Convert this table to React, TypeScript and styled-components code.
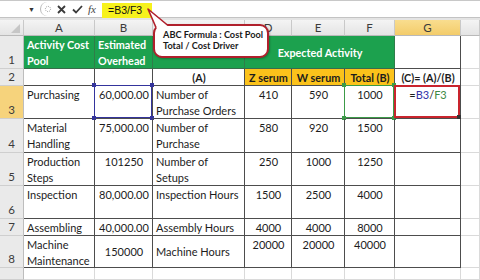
import React from 'react';
import styled, { createGlobalStyle, css } from 'styled-components';

const Global = createGlobalStyle`
  html, body { margin: 0; padding: 0; background: #fff; overflow: hidden; }
  * { box-sizing: border-box; }
`;

const FONT = `"Lato", "Open Sans", "Liberation Sans", sans-serif`;

const Page = styled.div`
  position: relative;
  width: 480px;
  height: 280px;
  overflow: hidden;
  display: flex;
  flex-direction: column;
  font-family: ${FONT};
  background: #e4e4e4;
`;

const FormulaBar = styled.div`
  height: 18px;
  display: flex;
  align-items: center;
  background: #fff;
  border-top: 1px solid #c8c8c8;
  border-bottom: 1px solid #c3c3c3;
  flex-shrink: 0;
`;

const NameBox = styled.div`
  width: 38px;
  height: 100%;
  display: flex;
  align-items: center;
  justify-content: flex-end;
  padding-right: 3px;
  font-size: 7px;
  color: #333;
`;

const ButtonGroup = styled.div`
  display: flex;
  align-items: center;
  height: 14px;
  width: 60px;
  margin-left: 2px;
  border-left: 1px solid #b8b8b8;
  border-radius: 8px 0 0 8px;
  padding-left: 1px;
`;

const BarIcon = styled.span<{ $w: number }>`
  width: ${p => p.$w}px;
  display: inline-flex;
  justify-content: center;
  align-items: center;
  color: #3a3a3a;
  line-height: 1;
`;

const Fx = styled.span`
  font-family: "Liberation Serif", "DejaVu Serif", serif;
  font-style: italic;
  font-size: 11px;
  color: #444;
  width: 14px;
  text-align: center;
`;

const FormulaInput = styled.div`
  flex: 1;
  height: 100%;
  display: flex;
  align-items: center;
  padding-left: 2px;
`;

const FormulaText = styled.span`
  background: #f7f21c;
  height: 15px;
  width: 50px;
  margin-top: 2px;
  padding-left: 6px;
  font-family: "Liberation Sans", sans-serif;
  font-size: 10.5px;
  line-height: 15px;
  color: #111;
`;

const Sheet = styled.div`
  flex: 1;
  margin-top: 2px;
  display: grid;
  grid-template-columns: 24px 71px 58px 92px 47px 53px 50px 66px 1fr;
  grid-template-rows: 16px 33px 17px 33px 34px 33px 33px 17px 32px 1fr;
  background: #fff;
`;

const ColHead = styled.div<{ $sel?: boolean }>`
  display: flex;
  align-items: center;
  justify-content: center;
  font-size: 11.5px;
  color: #3b3b3b;
  background: ${p => (p.$sel ? 'linear-gradient(#f9dd8f, #f3cc6a)' : 'linear-gradient(#f4f4f4, #e4e4e4)')};
  border-right: 1px solid #c9c9c9;
  border-bottom: 1px solid #b9b9b9;
`;

const Corner = styled(ColHead)`
  position: relative;
  &::after {
    content: '';
    position: absolute;
    right: 3px;
    bottom: 2px;
    border-left: 9px solid transparent;
    border-bottom: 9px solid #c6c6c6;
  }
`;

const RowHead = styled.div<{ $sel?: boolean }>`
  display: flex;
  align-items: flex-end;
  justify-content: center;
  padding-bottom: 1px;
  font-size: 11.5px;
  line-height: 14px;
  color: #3b3b3b;
  background: ${p => (p.$sel ? '#f6d37c' : '#eaeaea')};
  border-right: 1px solid #bdbdbd;
  border-bottom: 1px solid #cfcfcf;
`;

type Tone = 'green' | 'gold' | 'plain' | 'blank';

const Cell = styled.div<{
  $tone?: Tone;
  $align?: 'left' | 'center';
  $mid?: boolean;
  $bold?: boolean;
  $span?: number;
}>`
  position: relative;
  display: flex;
  flex-direction: column;
  justify-content: ${p => (p.$mid ? 'center' : 'flex-start')};
  align-items: ${p => (p.$align === 'left' ? 'flex-start' : 'center')};
  padding: 1px 2px 0 3px;
  font-size: ${p => (p.$bold ? '10.8px' : '11px')};
  line-height: 16px;
  white-space: nowrap;
  color: #1c1c1c;
  font-weight: ${p => (p.$bold ? 700 : 400)};
  grid-column: ${p => (p.$span ? `span ${p.$span}` : 'auto')};
  border-right: 1px solid #4d4d4d;
  border-bottom: 1px solid #4d4d4d;
  ${p =>
    p.$tone === 'green' &&
    css`
      background: #1ca14e;
      color: #fff;
      border-right-color: #2f7d4a;
      border-bottom-color: #3a6b4b;
    `}
  ${p =>
    p.$tone === 'gold' &&
    css`
      background: #fbc21b;
    `}
  ${p =>
    p.$tone === 'blank' &&
    css`
      border-right-color: #dadada;
      border-bottom-color: #dadada;
    `}
`;

const Frame = styled.div<{ $color: string; $w: number }>`
  position: absolute;
  inset: -1px 0 0 -1px;
  border: ${p => p.$w}px solid ${p => p.$color};
  pointer-events: none;
`;

const Knob = styled.span<{ $color: string; $x: 'l' | 'r'; $y: 't' | 'b' }>`
  position: absolute;
  width: 4px;
  height: 4px;
  background: ${p => p.$color};
  ${p => (p.$x === 'l' ? 'left: -3px;' : 'right: -3px;')}
  ${p => (p.$y === 't' ? 'top: -3px;' : 'bottom: -3px;')}
`;

const Ref = styled.span<{ $c: string }>`
  color: ${p => p.$c};
`;

const Callout = styled.div`
  position: absolute;
  left: 153px;
  top: 24px;
  width: 116px;
  height: 34px;
  background: #fff;
  border: 2px solid #b0202c;
  border-radius: 9px;
  box-shadow: 1px 1px 2px rgba(0, 0, 0, 0.25);
  padding: 3px 0 0 8px;
  font-family: ${FONT};
  font-weight: 700;
  font-size: 9.2px;
  line-height: 11px;
  color: #1a1a1a;
  white-space: nowrap;
`;

const Tail = styled.svg`
  position: absolute;
  left: 144px;
  top: 5px;
  overflow: visible;
`;

function Selection({ color, width = 1 }: { color: string; width?: number }) {
  return (
    <Frame $color={color} $w={width}>
      {width === 1 && (
        <>
          <Knob $color={color} $x="l" $y="t" />
          <Knob $color={color} $x="r" $y="t" />
          <Knob $color={color} $x="l" $y="b" />
        </>
      )}
      <Knob $color={width === 1 ? color : '#333'} $x="r" $y="b" />
    </Frame>
  );
}

type CellDef = {
  lines: string[];
  tone?: Tone;
  align?: 'left' | 'center';
  mid?: boolean;
  bold?: boolean;
  span?: number;
  sel?: 'blue' | 'green' | 'red';
  node?: React.ReactNode;
};

const L = (s: string, extra: Partial<CellDef> = {}): CellDef => ({ lines: s ? s.split('|') : [], align: 'left', ...extra });
const C = (s: string, extra: Partial<CellDef> = {}): CellDef => ({ lines: s ? s.split('|') : [], align: 'center', ...extra });

const rows: { n: number; h?: boolean; cells: CellDef[] }[] = [
  {
    n: 1,
    cells: [
      L('Activity Cost|Pool', { tone: 'green', bold: true }),
      L('Estimated|Overhead', { tone: 'green', bold: true }),
      L('', { tone: 'green' }),
      C('Expected Activity', { tone: 'green', bold: true, span: 3, mid: true }),
      C(''),
    ],
  },
  {
    n: 2,
    cells: [
      L(''),
      L(''),
      C('(A)', { bold: true, mid: true }),
      C('Z serum', { tone: 'gold', bold: true, mid: true }),
      C('W serum', { tone: 'gold', bold: true, mid: true }),
      C('Total (B)', { tone: 'gold', bold: true, mid: true }),
      C('(C)= (A)/(B)', { bold: true, mid: true }),
    ],
  },
  {
    n: 3,
    h: true,
    cells: [
      L('Purchasing'),
      C('60,000.00', { sel: 'blue' }),
      L('Number of|Purchase Orders'),
      C('410'),
      C('590'),
      C('1000', { sel: 'green' }),
      C('', {
        sel: 'red',
        node: (
          <span>
            =<Ref $c="#3434a8">B3</Ref>/<Ref $c="#3d8a45">F3</Ref>
          </span>
        ),
      }),
    ],
  },
  {
    n: 4,
    cells: [L('Material|Handling'), C('75,000.00'), L('Number of|Purchase'), C('580'), C('920'), C('1500'), C('')],
  },
  {
    n: 5,
    cells: [L('Production|Steps'), C('101250'), L('Number of|Setups'), C('250'), C('1000'), C('1250'), C('')],
  },
  {
    n: 6,
    cells: [L('Inspection'), C('80,000.00'), L('Inspection Hours'), C('1500'), C('2500'), C('4000'), C('')],
  },
  {
    n: 7,
    cells: [
      L('Assembling', { mid: true }),
      C('40,000.00', { mid: true }),
      L('Assembly Hours', { mid: true }),
      C('4000', { mid: true }),
      C('4000', { mid: true }),
      C('8000', { mid: true }),
      C(''),
    ],
  },
  {
    n: 8,
    cells: [
      L('Machine|Maintenance'),
      C('150000', { mid: true }),
      L('Machine Hours', { mid: true }),
      C('20000'),
      C('20000'),
      C('40000'),
      C(''),
    ],
  },
];

const selColor = { blue: '#34349c', green: '#3c9a48', red: '#c9242d' };

export default function App() {
  const letters = ['A', 'B', 'C', 'D', 'E', 'F', 'G', ''];
  return (
    <Page>
      <Global />
      <FormulaBar>
        <NameBox>▼</NameBox>
        <ButtonGroup>
          <BarIcon $w={12}>
            <svg width="8" height="8" viewBox="0 0 8 8">
              <circle cx="4" cy="4" r="2.6" fill="none" stroke="#9a9a9a" strokeWidth="1" strokeDasharray="1 1" />
            </svg>
          </BarIcon>
          <BarIcon $w={15}>
            <svg width="9" height="9" viewBox="0 0 9 9">
              <path d="M1 1 L8 8 M8 1 L1 8" stroke="#3a3a3a" strokeWidth="1.8" />
            </svg>
          </BarIcon>
          <BarIcon $w={16}>
            <svg width="11" height="9" viewBox="0 0 11 9">
              <path d="M1 4.5 L4 7.5 L10 1" stroke="#3a3a3a" strokeWidth="1.8" fill="none" />
            </svg>
          </BarIcon>
          <Fx>fx</Fx>
        </ButtonGroup>
        <FormulaInput>
          <FormulaText>=B3/F3</FormulaText>
        </FormulaInput>
      </FormulaBar>
      <Sheet>
        <Corner />
        {letters.map((l, i) => (
          <ColHead key={i} $sel={l === 'G'}>
            {l}
          </ColHead>
        ))}
        {rows.map(r => (
          <React.Fragment key={r.n}>
            <RowHead $sel={r.h}>{r.n}</RowHead>
            {r.cells.map((c, i) => (
              <Cell key={i} $tone={c.tone} $align={c.align} $mid={c.mid} $bold={c.bold} $span={c.span}>
                {c.node ?? c.lines.map((t, j) => <span key={j}>{t}</span>)}
                {c.sel && <Selection color={selColor[c.sel]} width={c.sel === 'red' ? 2 : 1} />}
              </Cell>
            ))}
            <Cell $tone="blank" />
          </React.Fragment>
        ))}
        <RowHead />
        {letters.map((_, i) => (
          <Cell key={i} $tone="blank" />
        ))}
      </Sheet>
      <Callout>
        ABC Formula : Cost Pool
        <br />
        Total / Cost Driver
      </Callout>
      <Tail width="30" height="26">
        <polygon points="4,4 24,21 13,24" fill="#fff" />
        <polyline points="24,20.5 4,4 12,22.5" fill="none" stroke="#b0202c" strokeWidth="1.6" strokeLinejoin="round" />
      </Tail>
    </Page>
  );
}
